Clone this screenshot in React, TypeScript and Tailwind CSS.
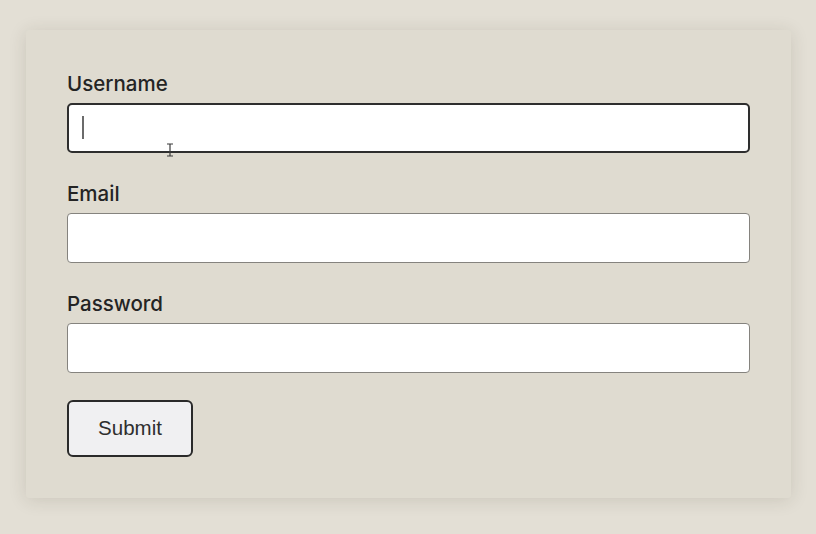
import React from 'react'

const Field: React.FC<{ label: string; type?: string; focused?: boolean }> = ({ label, type = 'text', focused }) => {
  return (
    <div className="flex flex-col">
      <label className="text-[20.5px] leading-[24px] font-medium text-[#242424] mt-[2px] mb-[7px]">{label}</label>
      <div className="relative">
        <input
          type={type}
          className={
            focused
              ? 'w-full h-[50px] bg-white border-2 border-[#2e2e2e] rounded-[5px] outline-none px-3'
              : 'w-full h-[50px] bg-white border border-[#85837e] rounded-[4px] outline-none px-3'
          }
        />
        {focused && (
          <>
            {/* text caret */}
            <span className="absolute left-[15px] top-[13px] w-[1.5px] h-[23px] bg-[#6b6b6b]" />
            {/* mouse i-beam */}
            <svg className="absolute left-[99px] top-[40px]" width="8" height="14" viewBox="0 0 8 14">
              <path d="M1 1h6M4 1v12M1 13h6" stroke="#3a3a3a" strokeWidth="1.2" fill="none" />
            </svg>
          </>
        )}
      </div>
    </div>
  )
}

export default function App() {
  return (
    <div
      className="w-[816px] h-[534px] bg-[#e3dfd5] pl-[26px] pt-[30px] overflow-hidden"
      style={{ fontFamily: 'Inter, "Liberation Sans", sans-serif' }}
    >
      <div className="w-[765px] bg-[#dfdbd0] rounded-[3px] shadow-[0_2px_18px_rgba(60,50,30,0.14)] px-[41px] pt-[40px] pb-[41px]">
        <form className="flex flex-col gap-[27px]" onSubmit={(e) => e.preventDefault()}>
          <Field label="Username" focused />
          <Field label="Email" type="email" />
          <Field label="Password" type="password" />
          <div>
            <button
              type="submit"
              className="w-[126px] h-[57px] bg-[#f0f0f2] border-2 border-[#2a2a2a] rounded-[6px] text-[20.5px] text-[#2e2e2e]"
              style={{ fontFamily: '"Liberation Sans", Arial, sans-serif' }}
            >
              Submit
            </button>
          </div>
        </form>
      </div>
    </div>
  )
}
